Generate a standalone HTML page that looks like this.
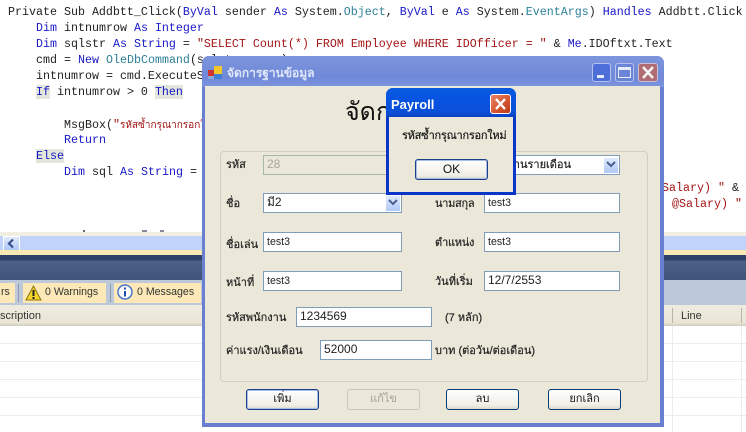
<!DOCTYPE html>
<html><head><meta charset="utf-8">
<style>
html,body{margin:0;padding:0;background:#fff}
#r{position:relative;width:746px;height:432px;overflow:hidden;background:#fff;font-family:"Liberation Sans","Noto Sans CJK SC",Tahoma,sans-serif;font-size:11px;color:#111}
#r div{position:absolute;box-sizing:border-box;white-space:pre}
.c{font-family:"Liberation Mono",monospace;font-size:11.67px;line-height:16px;height:16px;color:#222}
.k{color:#1818c8}.t{color:#2b7f96}.s{color:#a31515}.h{background:#e3e6da}
.l{font-family:"Liberation Sans","Noto Sans CJK SC",sans-serif;font-size:11px;line-height:14px;color:#222;-webkit-text-stroke:.2px #222}
.i{background:#fff;border:1px solid #7f9db9;font-size:12px;line-height:17px;padding-left:3px;color:#222}
.n{font-size:10.6px}
.b{border:1px solid #003c74;border-radius:3px;background:linear-gradient(#fff,#f0efe6 80%,#dcd8cc);text-align:center;font-size:11px;line-height:19px;color:#111}
.f{box-shadow:inset 0 0 0 1px #a5bde8;border-color:#1d3f85}
.a{background:linear-gradient(#e1eafe,#aec8f7);border:1px solid #fff}
.g{height:1px;background:#ececec;left:0;width:746px}
.w{font-size:10.6px;line-height:19px;color:#333}
</style></head><body><div id="r">
<div class="c" style="left:8px;top:4px">Private Sub Addbtt_Click(<span class="k">ByVal</span> sender <span class="k">As</span> System.<span class="t">Object</span>, <span class="k">ByVal</span> e <span class="k">As</span> System.<span class="t">EventArgs</span>) <span class="k">Handles</span> Addbtt.Click</div>
<div class="c" style="left:36px;top:20px"><span class="k">Dim</span> intnumrow <span class="k">As Integer</span></div>
<div class="c" style="left:36px;top:36px"><span class="k">Dim</span> sqlstr <span class="k">As String</span> = <span class="s">"SELECT Count(*) FROM Employee WHERE IDOfficer = "</span> &amp; <span class="k">Me</span>.IDOftxt.Text</div>
<div class="c" style="left:36px;top:52px">cmd = <span class="k">New</span> <span class="t">OleDbCommand</span>(sqlstr, conn)</div>
<div class="c" style="left:36px;top:68px">intnumrow = cmd.ExecuteScalar</div>
<div class="c" style="left:36px;top:84px"><span class="k h">If</span> intnumrow &gt; 0 <span class="k h">Then</span></div>
<div class="c" style="left:64px;top:116px">MsgBox(<span class="s">"<span style="font-family:'Noto Sans CJK SC',sans-serif;font-size:10px">รหัสซ้ำกรุณากรอกใหม่</span>"</span>)</div>
<div class="c k" style="left:64px;top:132px">Return</div>
<div class="c k" style="left:36px;top:148px"><span class="h">Else</span></div>
<div class="c" style="left:64px;top:164px"><span class="k">Dim</span> sql <span class="k">As String</span> =</div>
<div class="c s" style="left:662px;top:180px">Salary) " <span style="color:#222">&amp; _</span></div>
<div class="c s" style="left:672px;top:196px">@Salary) "</div>
<div style="left:83px;top:230px;width:2px;height:2px;background:#667"></div>
<div style="left:142px;top:230px;width:5px;height:2px;background:#889"></div>
<div style="left:160px;top:230px;width:4px;height:2px;background:#889"></div>

<div style="left:0;top:232px;width:746px;height:4px;background:#f1efe2"></div>
<div style="left:0;top:236px;width:746px;height:14px;background:#c1d3fb"></div>
<div class="a" style="left:3px;top:236px;width:17px;height:15px"></div>
<svg style="position:absolute;left:6px;top:238px" width="10" height="11"><path d="M7 1.5L3 5.5l4 4" fill="none" stroke="#39508a" stroke-width="2.2"/></svg>
<div style="left:0;top:250px;width:746px;height:5px;background:#f7e8b4"></div>
<div style="left:0;top:255px;width:746px;height:25px;background:linear-gradient(#2d4168 0,#2d4168 5px,#4b6186 6px,#3f5379)"></div>
<div style="left:0;top:280px;width:746px;height:25px;background:#bdc8d8"></div>
<div class="w" style="left:0;top:283px;width:15px;height:20px;background:#fce9b7;padding-left:1px">rs</div>
<div style="left:18px;top:284px;width:1px;height:18px;background:#8d9ab0"></div>
<div class="w" style="left:23px;top:283px;width:83px;height:20px;background:#fce9b7;padding-left:22px">0 Warnings</div>
<svg style="position:absolute;left:25px;top:285px" width="17" height="16" viewBox="0 0 17 16"><path d="M8.5 1L16 15H1z" fill="#f6d52a" stroke="#8a7410"/><path d="M8.5 5v6M8.5 12v2" stroke="#222" stroke-width="2"/></svg>
<div style="left:110px;top:284px;width:1px;height:18px;background:#8d9ab0"></div>
<div class="w" style="left:114px;top:283px;width:87px;height:20px;background:#fce9b7;padding-left:23px">0 Messages</div>
<svg style="position:absolute;left:117px;top:284px" width="16" height="16" viewBox="0 0 16 16"><circle cx="8" cy="8" r="7" fill="#fff" stroke="#4a74c8" stroke-width="1.5"/><path d="M8 3.5v2M8 7v5.5" stroke="#1f4fae" stroke-width="2"/></svg>
<div style="left:0;top:305px;width:746px;height:21px;background:linear-gradient(#efecdf,#e9e6d8 85%,#cfccbe)"></div>
<div style="left:0;top:308px;font-size:11px;line-height:16px;color:#333">scription</div>
<div style="left:672px;top:308px;width:1px;height:15px;background:#b8b5a6"></div>
<div style="left:681px;top:308px;font-size:11px;line-height:16px;color:#333">Line</div>
<div style="left:741px;top:308px;width:1px;height:15px;background:#b8b5a6"></div>
<div class="g" style="top:343px"></div><div class="g" style="top:361px"></div><div class="g" style="top:379px"></div><div class="g" style="top:397px"></div><div class="g" style="top:415px"></div>
<div style="left:672px;top:326px;width:1px;height:106px;background:#ececec"></div>
<div style="left:741px;top:326px;width:1px;height:106px;background:#ececec"></div>

<!-- main dialog -->
<div style="left:202px;top:56px;width:462px;height:371px;background:#6b7fd0;border-radius:7px 7px 0 0"></div>
<div style="left:202px;top:56px;width:462px;height:31px;background:linear-gradient(#7d95dc,#7089d8 70%,#7d94de);border-radius:7px 7px 0 0"></div>
<div style="left:205px;top:86px;width:455px;height:337px;background:#ebe8d9"></div>
<svg style="position:absolute;left:208px;top:66px" width="15" height="14"><rect x="0" y="4" width="6" height="6" fill="#c33"/><rect x="6" y="0" width="8" height="8" fill="#f5c62c"/><rect x="6" y="8" width="8" height="5" fill="#3f7fd6"/><rect x="0" y="10" width="6" height="3" fill="#8fa6d8"/></svg>
<div style="left:227px;top:65px;font-size:12px;line-height:16px;font-weight:bold;color:#dfe6fa">จัดการฐานข้อมูล</div>
<div style="left:592px;top:63px;width:19px;height:19px;border-radius:3px;background:#4f6fd8;border:1px solid #b4c2ee"></div>
<div style="left:597px;top:75px;width:7px;height:3px;background:#e6ecfb"></div>
<div style="left:615px;top:63px;width:19px;height:19px;border-radius:3px;background:#6a84d8;border:1px solid #b4c2ee"></div>
<div style="left:618px;top:67px;width:13px;height:11px;border:1px solid #e6ecfb;border-top-width:3px"></div>
<div style="left:638px;top:63px;width:20px;height:19px;border-radius:3px;background:#b06a72;border:1px solid #c9c2d8"></div>
<svg style="position:absolute;left:638px;top:63px" width="20" height="19"><path d="M5 4l10 11M15 4L5 15" stroke="#f3f0f0" stroke-width="2.6"/></svg>

<div style="left:345px;top:94px;font-size:25px;line-height:36px;color:#111;font-weight:normal;width:60px;overflow:hidden">จัดการ</div>
<div style="left:220px;top:151px;width:428px;height:231px;border:1px solid #d2cfbf;border-radius:4px"></div>

<div class="l" style="left:226px;top:158px">รหัส</div>
<div class="i" style="left:263px;top:155px;width:139px;height:20px;background:#ebe8d9;color:#aaa69a;border-color:#a9b5a8">28</div>
<div class="l" style="left:226px;top:197px">ชื่อ</div>
<div class="i" style="left:263px;top:193px;width:139px;height:20px">มี2</div>
<div class="a" style="left:385px;top:195px;width:16px;height:17px"></div>
<svg style="position:absolute;left:388px;top:199px" width="10" height="8"><path d="M1 1l4 4 4-4" fill="none" stroke="#4a5f8f" stroke-width="2"/></svg>

<div class="l" style="left:226px;top:238px">ชื่อเล่น</div>
<div class="i" style="left:263px;top:232px;width:139px;height:20px"><span class="n">test3</span></div>
<div class="l" style="left:226px;top:276px">หน้าที่</div>
<div class="i" style="left:263px;top:271px;width:139px;height:20px"><span class="n">test3</span></div>

<div class="i" style="left:484px;top:155px;width:136px;height:20px"></div>
<div class="l" style="left:487px;top:158px">พนักงานรายเดือน</div>
<div class="a" style="left:603px;top:157px;width:16px;height:17px"></div>
<svg style="position:absolute;left:606px;top:161px" width="10" height="8"><path d="M1 1l4 4 4-4" fill="none" stroke="#4a5f8f" stroke-width="2"/></svg>
<div class="l" style="left:435px;top:197px;letter-spacing:-.3px">นามสกุล</div>
<div class="i" style="left:484px;top:193px;width:136px;height:20px"><span class="n">test3</span></div>
<div class="l" style="left:435px;top:236px;letter-spacing:-.3px">ตำแหน่ง</div>
<div class="i" style="left:484px;top:232px;width:136px;height:20px"><span class="n">test3</span></div>
<div class="l" style="left:435px;top:275px">วันที่เริ่ม</div>
<div class="i" style="left:484px;top:271px;width:136px;height:20px">12/7/2553</div>

<div class="l" style="left:226px;top:311px">รหัสพนักงาน</div>
<div class="i" style="left:296px;top:307px;width:136px;height:20px">1234569</div>
<div class="l" style="left:445px;top:311px">(7 หลัก)</div>
<div class="l" style="left:226px;top:344px">ค่าแรง/เงินเดือน</div>
<div class="i" style="left:320px;top:340px;width:112px;height:20px">52000</div>
<div class="l" style="left:435px;top:344px">บาท (ต่อวัน/ต่อเดือน)</div>

<div class="b f" style="left:246px;top:389px;width:73px;height:21px">เพิ่ม</div>
<div class="b" style="left:347px;top:389px;width:73px;height:21px;border-color:#c9c7b8;background:#ebe8d9;color:#a5a294">แก้ไข</div>
<div class="b" style="left:446px;top:389px;width:73px;height:21px">ลบ</div>
<div class="b" style="left:548px;top:389px;width:73px;height:21px">ยกเลิก</div>

<!-- message box -->
<div style="left:386px;top:88px;width:130px;height:107px;background:#0a36c8;border-radius:7px 7px 0 0"></div>
<div style="left:386px;top:88px;width:130px;height:30px;background:linear-gradient(#0a5bdc,#0754e2 30%,#0a4fd8 80%,#0a3fc0);border-radius:7px 7px 0 0"></div>
<div style="left:389px;top:117px;width:124px;height:75px;background:#ebe8d9"></div>
<div style="left:391px;top:96px;font-size:13px;line-height:17px;font-weight:bold;color:#fff">Payroll</div>
<div style="left:490px;top:94px;width:21px;height:20px;border-radius:3px;background:linear-gradient(135deg,#e9866a,#d4522c 60%,#bb3a1c);border:1px solid #fff"></div>
<svg style="position:absolute;left:490px;top:94px" width="21" height="20"><path d="M6 5l9 10M15 5L6 15" stroke="#fff" stroke-width="2.4"/></svg>
<div class="l" style="left:402px;top:129px;color:#111;letter-spacing:-.25px">รหัสซ้ำกรุณากรอกใหม่</div>
<div class="b f" style="left:415px;top:159px;width:73px;height:21px;font-size:12px">OK</div>
</div></body></html>
